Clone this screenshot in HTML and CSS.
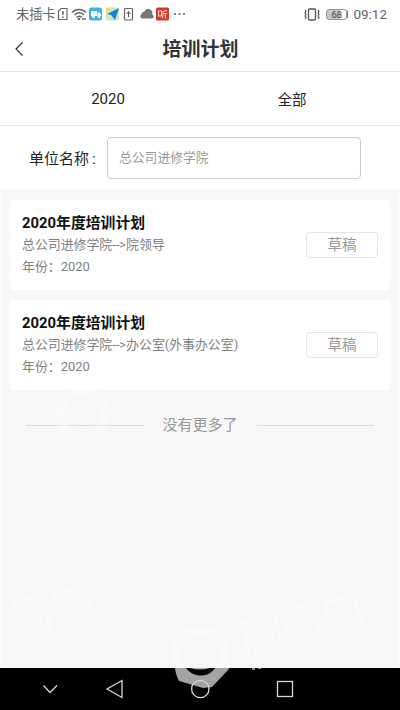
FILE: index.html
```html
<!DOCTYPE html>
<html lang="zh-CN">
<head>
<meta charset="utf-8">
<title>培训计划</title>
<link rel="stylesheet" href="styles.css">
</head>
<body>
<div class="phone">
  <header class="status">
    <span class="carrier">未插卡</span>
    <svg class="status-icons" width="130" height="16" viewBox="0 0 130 16" fill="none">
      <path d="M4 2.500h6v11H1.500V5z" stroke="#666" stroke-width="1.200"/><path d="M6 5v4M6 10.500v1.500" stroke="#555" stroke-width="1.300"/>
      <path d="M15 6.500c4-4 10-4 14 0M17.500 9c3-3 7-3 9.500 0M19.500 11.500c1.500-1.700 4-1.700 5.500 0" stroke="#666" stroke-width="1.400"/><circle cx="22" cy="13" r="1.300" fill="#666"/><path d="M25 13h4" stroke="#666" stroke-width="1.500"/>
      <rect x="32" y="1.500" width="13" height="13" rx="2.500" fill="#3db5dc"/><path d="M34 5h6v5h-6zM40.500 6.500h2.500l1.500 3.500h-4z" fill="#fff"/><circle cx="36.500" cy="10.500" r="1.500" fill="#fff"/><circle cx="42" cy="10.500" r="1.500" fill="#fff"/>
      <rect x="49" y="1.500" width="13" height="13" rx="2" fill="#cfe5c6"/><path d="M49 2h6l-6 6z" fill="#f3d777"/><path d="m62 2-12 6 4 1 4 5z" fill="#1686cb"/>
      <rect x="67.500" y="2.500" width="8" height="11.500" rx="1" stroke="#666" stroke-width="1.200"/><path d="M71.500 11V6m-2 2 2-2.500 2 2.500" stroke="#555"/>
      <path d="M85 12.500a2.500 2.500 0 0 1-.5-4.500 3 3 0 0 1 3-2.500 4 4 0 0 1 7.500 3 2 2 0 0 1-.5 4z" fill="#777"/>
      <rect x="99" y="1.500" width="13" height="13" rx="1.500" fill="#db3525"/><path d="M101.500 5h3v5h-3zM110 4.500l-4 1v4l-1 3M106 7.500h4M108.500 7.500v5" stroke="#ffd5c9" stroke-width="1.100"/>
      <path d="M117 8h2M121.500 8h2M126 8h2" stroke="#555" stroke-width="1.700"/>
    </svg>
    <svg class="vibrate" width="16" height="13" viewBox="0 0 16 13" fill="none" stroke="#555"><rect x="4.500" y="1" width="7" height="11" rx="1" stroke-width="1.300"/><path d="m1 2 1 1.500L1 5l1 1.500L1 8l1 1.500L1 11M14 2l1 1.500L14 5l1 1.500L14 8l1 1.500-1 1.500" stroke-width="1.200"/></svg>
    <span class="battery">68</span>
    <span class="clock">09:12</span>
  </header>
  <div class="titlebar">
    <svg width="10" height="16" viewBox="0 0 10 16" fill="none" stroke="#333" stroke-width="1.200"><path d="M8.500 1.500 2 8l6.500 6.500"/></svg>
    <h1>培训计划</h1>
  </div>
  <nav class="tabs"><span class="year">2020</span><span>全部</span></nav>
  <div class="search"><label>单位名称<span class="colon">:</span></label><div class="field">总公司进修学院</div></div>
  <main>
    <section class="card"><div><h2>2020年度培训计划</h2><p>总公司进修学院--&gt;院领导</p><p class="date">年份：2020</p></div><span class="draft">草稿</span></section>
    <section class="card"><div><h2>2020年度培训计划</h2><p>总公司进修学院--&gt;办公室(外事办公室)</p><p class="date">年份：2020</p></div><span class="draft">草稿</span></section>
    <div class="end">没有更多了</div>
  </main>
  <footer>
    <svg width="400" height="42" viewBox="0 0 400 42" fill="none">
      <path d="M175 0q1 8 4 13l24 7 9-1L229 1V0h-14c-6 10-22 10-29 0z" fill="#a3a3a3"/><path d="M190 0q10 3 20 0z" fill="#aaa"/><path d="M252 0h3v2h-3zM258 0h3v1h-3z" fill="#888"/>
      <g stroke="#d8d8d8" stroke-width="1.300"><path d="m43.500 17.500 6.500 7 7-7M122 12.500v17l-15-8.500z"/><circle cx="200.300" cy="21" r="8.700"/><rect x="277.500" y="13.500" width="15" height="15"/></g>
    </svg>
  </footer>
  <div class="watermark">
    <svg width="400" height="668" viewBox="0 0 400 668">
      <g fill="none" stroke="#fff" stroke-width="9" opacity=".25"><circle cx="83" cy="414" r="23"/><path d="m187 633 27-1 10 12 1 17-11 20h-27l-11-20 1-17z"/></g>
      <g fill="#fff" opacity=".3"><text x="16" y="636" transform="rotate(-14 16 636)">蜀网</text><text x="245" y="655" transform="rotate(-14 245 655)">脚蜀网</text></g>
    </svg>
  </div>
</div>
</body>
</html>
```
FILE: styles.css
```css
* { box-sizing: border-box; }
body { margin: 0; font-family: Roboto, "Noto Sans CJK SC", sans-serif; background: #fff; }
h1, h2, p { margin: 0; }
.phone { position: relative; width: 400px; height: 710px; display: flex; flex-direction: column; overflow: hidden; }
.status { height: 28px; display: flex; align-items: center; padding: 0 13px 0 16px; color: #666; }
.carrier { font-size: 13.200px; width: 41px; white-space: nowrap; padding-bottom: 1px; }
.vibrate { margin-left: auto; margin-right: 6px; }
.battery { width: 21px; height: 11px; border: 1px solid #999; border-radius: 3px; background: linear-gradient(90deg, #c5c5c5 68%, #fff 68%); font-size: 9.500px; line-height: 9px; text-align: center; color: #444; box-shadow: 2px 0 0 -1px #777; margin-right: 6px; }
.clock { font-size: 13.500px; }
.titlebar { height: 44px; display: flex; align-items: center; padding: 0 14px 0; border-bottom: 1px solid #e9e9e9; }
.titlebar svg { margin-bottom: 1px; }
.titlebar h1 { flex: 1; text-align: center; font-size: 19px; line-height: 24px; color: #333; padding: 0 9px 0 0; }
.tabs { height: 53px; display: flex; align-items: center; }
.tabs span { width: 152px; text-align: center; font-size: 14.500px; color: #222; }
.tabs .year { width: 216px; font-size: 15px; }
.search { height: 64px; border-top: 1px solid #ececec; display: flex; align-items: center; padding-left: 29px; }
.search label { width: 78px; font-size: 15px; color: #222; white-space: nowrap; }
.colon { margin-left: 3px; }
.field { width: 254px; height: 42px; border: 1px solid #ccc; border-radius: 4px; padding-left: 11px; line-height: 40px; font-size: 12.800px; color: #999; }
main { height: 479px; background: #f7f7f7; padding: 11px 8px; border: solid #fafafa; border-width: 0 2px; flex: none; }
.card { height: 90px; background: #fff; border-radius: 4px; display: flex; justify-content: space-between; align-items: center; padding: 0 12px; margin: 0 0 10px; }
h2 { font-size: 14.850px; line-height: 25px; color: #111; }
.card p { font-size: 12.900px; line-height: 18px; color: #808080; white-space: nowrap; }
.card .date { line-height: 26px; }
.draft { width: 72px; height: 26px; border: 1px solid #e5e5e5; border-radius: 4px; color: #999; font-size: 14.500px; line-height: 26px; text-align: center; }
.end { display: flex; align-items: center; gap: 19px; height: 50px; padding: 0 16px; font-size: 15px; line-height: 20px; color: #999; }
.end::before, .end::after { content: ""; flex: 1; height: 1px; background: #ddd; }
footer { height: 42px; background: #000; flex: none; }
footer svg { display: block; }
.watermark { position: absolute; top: 0; left: 0; pointer-events: none; }
.watermark svg { display: block; }
.watermark text { font: 700 42px "Noto Sans CJK SC", sans-serif; }
```
